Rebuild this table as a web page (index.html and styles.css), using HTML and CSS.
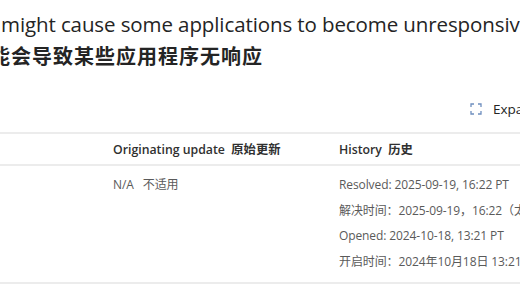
FILE: index.html
```html
<!DOCTYPE html>
<html lang="en">
<head>
<meta charset="utf-8">
<link rel="stylesheet" href="styles.css">
</head>
<body>
<div class="page">
  <div class="title">
    <div class="title-en">might cause some applications to become unresponsive</div>
    <div class="title-zh">可能会导致某些应用程序无响应</div>
  </div>
  <div class="toolbar">
    <button class="expand">
      <svg width="12" height="12" viewBox="0 0 12 12" fill="none" stroke="#6f8fbf" stroke-width="1.3">
        <path d="M1 4V1h3M8 1h3v3M11 8v3H8M4 11H1V8"/>
      </svg>
      <span>Expand</span>
    </button>
  </div>
  <div class="table">
    <div class="row head">
      <div class="cell c1"></div>
      <div class="cell c2">Originating update&nbsp; 原始更新</div>
      <div class="cell c3">History&nbsp; 历史</div>
    </div>
    <div class="row body">
      <div class="cell c1"></div>
      <div class="cell c2"><div class="line">N/A&nbsp;&nbsp; 不适用</div></div>
      <div class="cell c3">
        <div class="line">Resolved: 2025-09-19, 16:22 PT</div>
        <div class="line">解决时间：2025-09-19，16:22（太平洋时间）</div>
        <div class="line">Opened: 2024-10-18, 13:21 PT</div>
        <div class="line">开启时间：2024年10月18日 13:21（太平洋时间）</div>
      </div>
    </div>
  </div>
</div>
</body>
</html>
```
FILE: styles.css
```css
html, body {
  margin: 0;
  padding: 0;
  background: #fff;
  overflow: hidden;
}
body {
  width: 520px;
  height: 293px;
  font-family: "Open Sans", "Noto Sans CJK SC", sans-serif;
  color: #242424;
}
.page {
  width: 520px;
}
.title {
  padding-top: 10px;
  white-space: nowrap;
}
.title-en {
  font-size: 20.5px;
  font-weight: 500;
  line-height: 28px;
  margin-left: 1px;
  letter-spacing: -0.1px;
}
.title-zh {
  font-family: "Noto Sans CJK SC", sans-serif;
  font-weight: 700;
  font-size: 20px;
  line-height: 30px;
  margin-top: 3px;
  margin-left: -31px;
  letter-spacing: 1px;
}
.toolbar {
  display: flex;
  justify-content: flex-end;
  height: 34px;
  margin-top: 27px;
  margin-right: -60px;
}
.expand {
  display: flex;
  align-items: center;
  gap: 11px;
  background: none;
  border: 0;
  padding: 0;
  font-family: "Open Sans", sans-serif;
  font-size: 13.5px;
  color: #242424;
  height: 22px;
  width: 110px;
  justify-content: flex-start;
}
.table {
  white-space: nowrap;
}
.row {
  display: grid;
  grid-template-columns: 113px 226px 1fr;
  border-top: 2px solid #ececec;
}
.row.head {
  height: 30px;
  align-items: center;
  font-size: 12.3px;
  font-weight: 600;
  color: #303030;
}
.row.body {
  border-bottom: 2px solid #ececec;
  padding: 6px 0 8px;
  font-size: 12px;
  letter-spacing: -0.1px;
  color: #5a5a5a;
}
.cell {
  overflow: hidden;
}
.line {
  line-height: 25.5px;
}
```
